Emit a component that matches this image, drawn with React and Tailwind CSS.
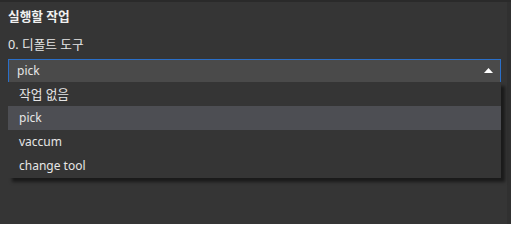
const options = ['작업 없음', 'pick', 'vaccum', 'change tool']

export default function App() {
  const selected = 'pick'
  return (
    <div
      className="w-[511px] h-[224px] bg-[#353535] flex flex-col overflow-hidden text-[12px] text-[#e6e6e6]"
      style={{ fontFamily: '"Noto Sans", "Noto Sans CJK KR", sans-serif' }}
    >
      <div className="h-[2px] bg-[#2a2a2a] shrink-0" />
      <div className="flex flex-1">
        <div className="flex-1 pl-2 pr-[6px] pt-[6px]">
          <div className="h-4 leading-4 font-bold text-[12.7px] text-[#f0f0f0]">실행할 작업</div>
          <div className="mt-3 h-4 leading-4 text-[12.7px]">0. 디폴트 도구</div>
          <div className="relative mt-[7px]">
            <div className="h-[23px] bg-[#4a4a4a] border-t border-x border-[#2a6fc9] flex items-center justify-between pl-2 pr-[7px]">
              <span className="leading-4">{selected}</span>
              <svg width="9" height="5" viewBox="0 0 9 5" className="mt-[-1px]">
                <polygon points="4.5,0 9,5 0,5" fill="#ffffff" />
              </svg>
            </div>
            <ul className="absolute top-full left-0 right-0 bg-[#353535] shadow-[4px_4px_3px_rgba(0,0,0,0.5)]">
              {options.map((o) => (
                <li
                  key={o}
                  className={
                    'h-6 flex items-center pl-[11px] leading-4 ' +
                    (o === selected ? 'bg-[#4d4e53] ' : '') +
                    (o === '작업 없음' ? 'text-[12.7px]' : '')
                  }
                >
                  {o}
                </li>
              ))}
            </ul>
          </div>
        </div>
        <div className="w-[4px] bg-[#303030]" />
      </div>
    </div>
  )
}
